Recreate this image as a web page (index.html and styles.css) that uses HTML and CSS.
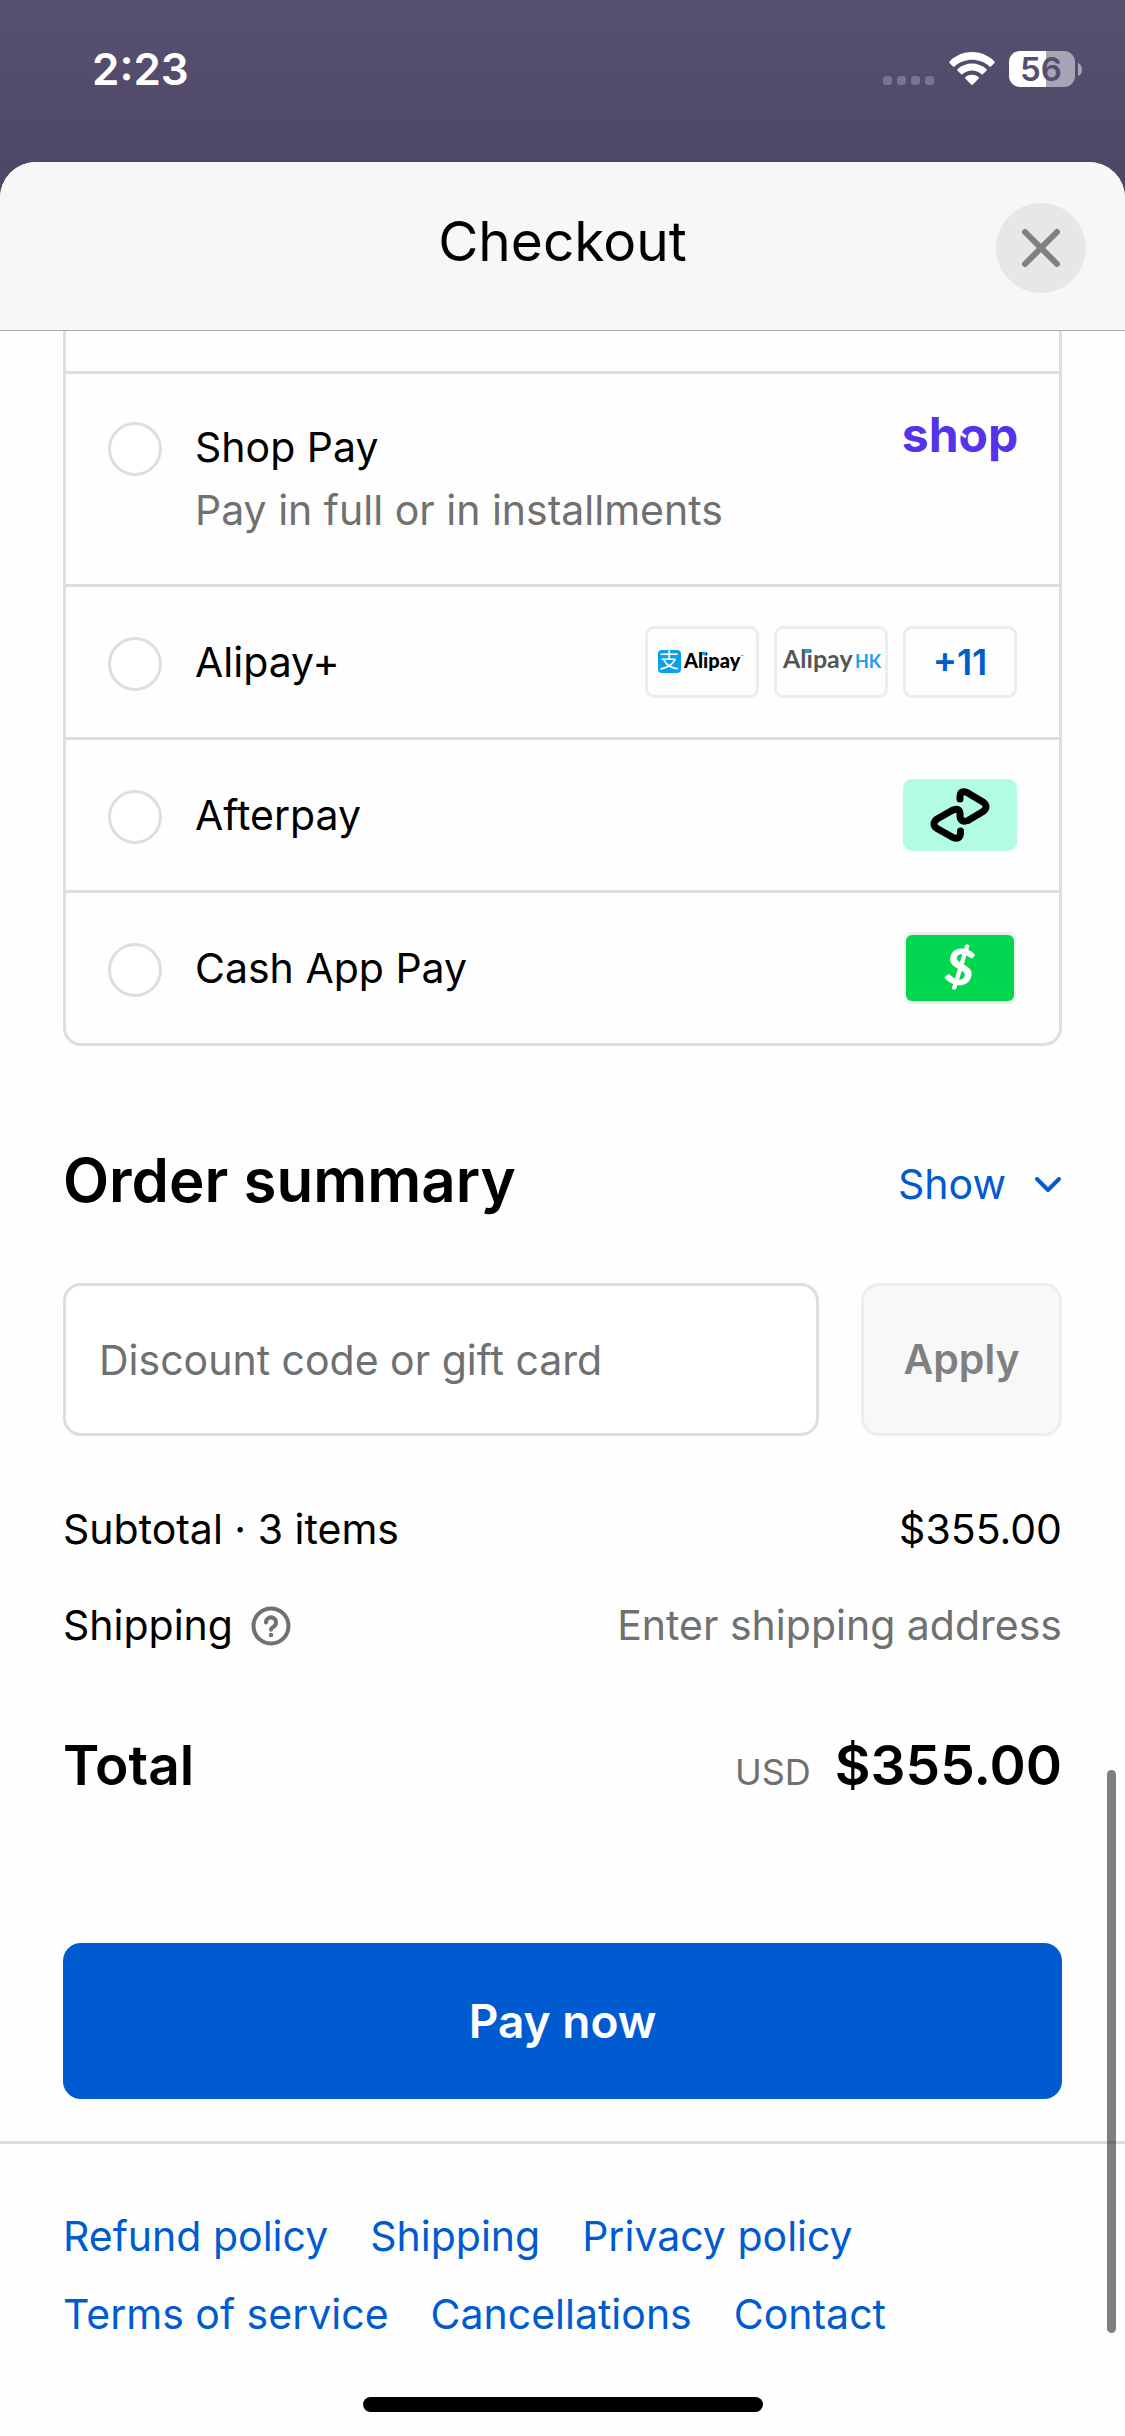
FILE: index.html
```
<!DOCTYPE html>
<html lang="en">
<head>
    <meta charset="UTF-8">
    <meta name="viewport" content="width=device-width, initial-scale=1.0">
    <title>Checkout</title>
    <link rel="stylesheet" href="styles.css">
</head>
<body>
<div class="status-bar">
    <span class="time">2:23</span>
    <div class="status-icons">
        <svg class="signal" width="52" height="36" viewBox="0 0 52 36">
            <rect x="0" y="25" width="9" height="9" rx="3"/>
            <rect x="14" y="25" width="9" height="9" rx="3"/>
            <rect x="28" y="25" width="9" height="9" rx="3"/>
            <rect x="42" y="25" width="9" height="9" rx="3"/>
        </svg>
        <svg width="46" height="36" viewBox="0 0 46 36" fill="#fff">
            <path d="M0.6 10.6a1.2 1.2 0 0 1 0-1.7C13-3.500 33-3.500 45.400 8.900a1.200 1.200 0 0 1 0 1.700l-3.300 3.300a1.200 1.200 0 0 1-1.700 0C30.800 5 15.200 5 5.600 13.900a1.200 1.200 0 0 1-1.700 0z" transform="translate(0 1.500)"/>
            <path d="M8.600 19.200a1.200 1.200 0 0 1 0-1.700c8.200-7.400 20.600-7.400 28.800 0a1.200 1.200 0 0 1 0 1.700l-3.400 3.400a1.200 1.200 0 0 1-1.700 0c-5.300-4.700-13.300-4.700-18.600 0a1.200 1.200 0 0 1-1.700 0z" transform="translate(0 0.500)"/>
            <path d="M16.500 27.300a1.200 1.200 0 0 1 0-1.700c3.800-3.200 9.200-3.200 13 0a1.200 1.200 0 0 1 0 1.700l-5.600 5.700a1.200 1.200 0 0 1-1.700 0z" transform="translate(0 0.500)"/>
        </svg>
        <svg class="battery" width="74" height="36" viewBox="0 0 74 36">
            <path d="M11 0H37V36H11A11 11 0 0 1 0 25V11A11 11 0 0 1 11 0z" fill="#fff"/>
            <path d="M37 0H55A11 11 0 0 1 66 11V25A11 11 0 0 1 55 36H37z" fill="#a9a3b6"/>
            <path d="M69 12q4 1.500 4 6.500t-4 6.500z" fill="#a9a3b6"/>
            <text x="32" y="30" text-anchor="middle">56</text>
        </svg>
    </div>
</div>

<div class="sheet">
    <header class="sheet-header">
        <h1>Checkout</h1>
        <button class="close" type="button" aria-label="Close">
            <svg width="38" height="38" viewBox="0 0 38 38" fill="none" stroke="#808082" stroke-width="6" stroke-linecap="round">
                <path d="M3 3l32 32M35 3L3 35"/>
            </svg>
        </button>
    </header>

    <main>
        <div class="methods">
            <div class="method-cut"></div>
            <div class="method method-tall">
                <input type="radio" name="method" id="shop-pay">
                <label for="shop-pay">Shop Pay<small>Pay in full or in installments</small></label>
                <svg class="shop-logo" width="114" height="63" viewBox="0 0 114 63">
                    <text x="57" y="36" text-anchor="middle">shop</text>
                    <path d="M53 14l10 7" stroke="#fefefe" stroke-width="3"/>
                </svg>
            </div>
            <div class="method">
                <input type="radio" name="method" id="alipay">
                <label for="alipay">Alipay+</label>
                <div class="badges">
                    <span class="badge">
                        <svg width="90" height="30" viewBox="0 0 90 30">
                            <rect x="1" y="3" width="23" height="23" rx="4" fill="#0a9fe6"/>
                            <text class="ali-mark" x="12" y="21" text-anchor="middle">支</text>
                            <text class="ali-name" x="27" y="21">Alipay</text>
                            <rect x="45" y="5" width="4" height="3" fill="#0a9fe6"/>
                            <text class="ali-tm" x="84" y="11">™</text>
                        </svg>
                    </span>
                    <span class="badge">
                        <svg width="102" height="30" viewBox="0 0 102 30">
                            <text class="ali-hk-name" x="3" y="21">Alipay</text>
                            <rect x="25" y="2" width="5" height="4" fill="#1ba3e8"/>
                            <text class="ali-hk" x="75" y="21">HK</text>
                        </svg>
                    </span>
                    <button class="badge more" type="button">+11</button>
                </div>
            </div>
            <div class="method">
                <input type="radio" name="method" id="afterpay">
                <label for="afterpay">Afterpay</label>
                <svg width="114" height="72" viewBox="0 0 114 72">
                    <rect width="114" height="72" rx="9" fill="#b2fce4"/>
                    <path d="M57 20V18Q57 10.500 64 13.500L80 23Q86 27.500 80 32.500L65 41.500Q57.500 44 57 37V34Q56 28 49 31.500L34 40Q28 45 34 49.500L50 58.500Q57 61 57.500 54V52" fill="none" stroke="#000" stroke-width="7" stroke-linejoin="round" stroke-linecap="round"/>
                </svg>
            </div>
            <div class="method">
                <input type="radio" name="method" id="cash-app">
                <label for="cash-app">Cash App Pay</label>
                <svg width="114" height="72" viewBox="0 0 114 72">
                    <rect x="1" width="112" height="72" rx="8" fill="#ececec"/>
                    <rect x="3" y="3" width="108" height="66" rx="6" fill="#00d64f"/>
                    <text class="dollar" x="57" y="53" text-anchor="middle" transform="rotate(12 57 36)">$</text>
                </svg>
            </div>
        </div>

        <div class="summary-head">
            <h2>Order summary</h2>
            <button class="show" type="button">Show
                <svg width="28" height="18" viewBox="0 0 28 18" fill="none" stroke="#005bd1" stroke-width="4" stroke-linecap="round" stroke-linejoin="round">
                    <path d="M3 3l11 11L25 3"/>
                </svg>
            </button>
        </div>

        <form class="discount">
            <input type="text" placeholder="Discount code or gift card" aria-label="Discount code or gift card">
            <button type="button" disabled>Apply</button>
        </form>

        <div class="line">
            <span>Subtotal · 3 items</span>
            <span>$355.00</span>
        </div>
        <div class="line">
            <span class="with-icon">Shipping
                <svg width="40" height="40" viewBox="0 0 40 40" fill="none" stroke="#707070" stroke-width="4" stroke-linecap="round">
                    <circle cx="20" cy="20" r="17.500"/>
                    <path d="M15 16.500a5 5 0 1 1 7.600 4.200q-2.600 1.500-2.600 3"/>
                    <circle cx="20" cy="29" r="1" stroke-width="2.500"/>
                </svg>
            </span>
            <span class="muted">Enter shipping address</span>
        </div>
        <div class="total">
            <span>Total</span>
            <span class="amount"><small>USD</small>$355.00</span>
        </div>

        <button class="pay" type="button">Pay now</button>
    </main>

    <footer>
        <nav>
            <a href="#">Refund policy</a>
            <a href="#">Shipping</a>
            <a href="#">Privacy policy</a>
            <a href="#">Terms of service</a>
            <a href="#">Cancellations</a>
            <a href="#">Contact</a>
        </nav>
        <div class="home-bar"></div>
    </footer>
    <div class="scroll-thumb"></div>
</div>
</body>
</html>
```
FILE: styles.css
```
* {
    box-sizing: border-box;
}
body {
    margin: 0;
    background: linear-gradient(to bottom, #585071 0, #4e4765 162px);
    font-family: Inter, "Liberation Sans", sans-serif;
    font-size: 41px;
    line-height: 63px;
    color: #000;
}
button, input {
    font: inherit;
}
button {
    border: 0;
    padding: 0;
    background: none;
}
h1, h2 {
    margin: 0;
}
svg {
    display: block;
    flex: none;
    overflow: visible;
}

/* status bar */
.status-bar {
    display: flex;
    justify-content: space-between;
    height: 162px;
    padding: 38px 42px 0 92px;
    color: #fff;
}
.time {
    font-size: 44px;
    font-weight: 600;
}
.status-icons {
    display: flex;
    gap: 14px;
    padding-top: 13px;
}
.signal {
    fill: #7b7490;
}
.battery text {
    font-size: 33px;
    font-weight: 600;
    line-height: 36px;
    fill: #544d6d;
}

/* sheet */
.sheet {
    position: relative;
    background: #fefefe;
    border-radius: 36px 36px 0 0;
}
.sheet-header {
    display: grid;
    grid-template-columns: 1fr auto 1fr;
    align-items: start;
    padding: 41px 39px 37px;
    background: #f7f7f7;
    border-bottom: 1px solid #aaa;
    border-radius: 36px 36px 0 0;
}
.sheet-header h1 {
    grid-column: 2;
    font-size: 55px;
    font-weight: 400;
    line-height: 76px;
}
.close {
    display: flex;
    align-items: center;
    justify-content: center;
    justify-self: end;
    width: 90px;
    height: 90px;
    border-radius: 50%;
    background: #e7e7e8;
}
main {
    padding: 0 63px 42px;
}

/* payment methods */
.methods {
    border: 3px solid #dedede;
    border-top: 0;
    border-radius: 0 0 18px 18px;
}
.method-cut {
    height: 40px;
}
.method {
    display: flex;
    align-items: center;
    gap: 33px;
    min-height: 153px;
    padding: 39px 42px;
    border-top: 3px solid #dedede;
}
.method-tall {
    align-items: flex-start;
    padding: 42px;
}
.method input {
    appearance: none;
    flex: none;
    width: 54px;
    height: 54px;
    margin: 3px 0 0;
    border: 3px solid #dedede;
    border-radius: 50%;
    background: #fff;
}
.method-tall input {
    margin-top: 6px;
}
.method label {
    flex: 1;
}
.method small {
    display: block;
    font-size: 41px;
    color: #707070;
}
.shop-logo text {
    font-size: 48px;
    font-weight: 700;
    fill: #5433eb;
}
.badges {
    display: flex;
    gap: 15px;
}
.badge {
    display: flex;
    align-items: center;
    justify-content: center;
    width: 114px;
    height: 72px;
    border: 3px solid #ededed;
    border-radius: 9px;
}
.more {
    font-size: 36px;
    font-weight: 600;
    color: #005bd1;
}
.ali-mark {
    font-family: "Noto Sans CJK SC", sans-serif;
    font-size: 20px;
    fill: #fff;
}
.ali-name {
    font-family: Lato, sans-serif;
    font-size: 20px;
    font-weight: 900;
}
.ali-tm {
    font-size: 4px;
}
.ali-hk-name {
    font-family: Lato, sans-serif;
    font-size: 25px;
    font-weight: 700;
    fill: #555;
}
.ali-hk {
    font-family: Lato, sans-serif;
    font-size: 18px;
    font-weight: 700;
    fill: #1ba3e8;
}
.dollar {
    font-family: Lato, sans-serif;
    font-size: 50px;
    font-weight: 900;
    fill: #fff;
}

/* order summary */
.summary-head {
    display: flex;
    justify-content: space-between;
    align-items: flex-end;
    margin: 98px 0 67px;
}
.summary-head h2 {
    font-size: 60px;
    font-weight: 600;
    line-height: 72px;
}
.show {
    display: flex;
    align-items: center;
    gap: 28px;
    color: #005bd1;
}
.discount {
    display: flex;
    gap: 42px;
    margin-bottom: 62px;
}
.discount input {
    flex: 1;
    min-width: 0;
    height: 153px;
    padding: 0 33px;
    border: 3px solid #dedede;
    border-radius: 18px;
    background: #fff;
}
.discount input::placeholder {
    color: #707070;
    opacity: 1;
}
.discount button {
    width: 201px;
    border: 3px solid #ededed;
    border-radius: 18px;
    background: #f8f8f8;
    color: #808080;
    font-weight: 600;
}
.line {
    display: flex;
    justify-content: space-between;
    margin-bottom: 33px;
}
.with-icon {
    display: flex;
    align-items: center;
    gap: 18px;
}
.muted {
    color: #707070;
}
.total {
    display: flex;
    justify-content: space-between;
    height: 72px;
    margin: 72px 0 142px;
    font-size: 55px;
    font-weight: 600;
    line-height: 72px;
}
.amount {
    display: flex;
    align-items: baseline;
    gap: 24px;
}
.amount small {
    font-size: 36px;
    font-weight: 400;
    color: #707070;
}
.pay {
    display: block;
    width: 100%;
    height: 156px;
    border-radius: 18px;
    background: #005bd1;
    color: #fff;
    font-size: 46px;
    font-weight: 600;
}

/* footer */
footer {
    padding: 61px 63px 24px;
    border-top: 3px solid #dedede;
}
nav {
    display: flex;
    flex-wrap: wrap;
    gap: 15px 42px;
}
nav a {
    color: #005bd1;
    text-decoration: none;
}
.home-bar {
    width: 400px;
    height: 15px;
    margin: 51px auto 0;
    border-radius: 8px;
    background: #000;
}
.scroll-thumb {
    position: absolute;
    right: 9px;
    bottom: 103px;
    width: 9px;
    height: 563px;
    border-radius: 5px;
    background: rgba(0, 0, 0, 0.5);
}
```
